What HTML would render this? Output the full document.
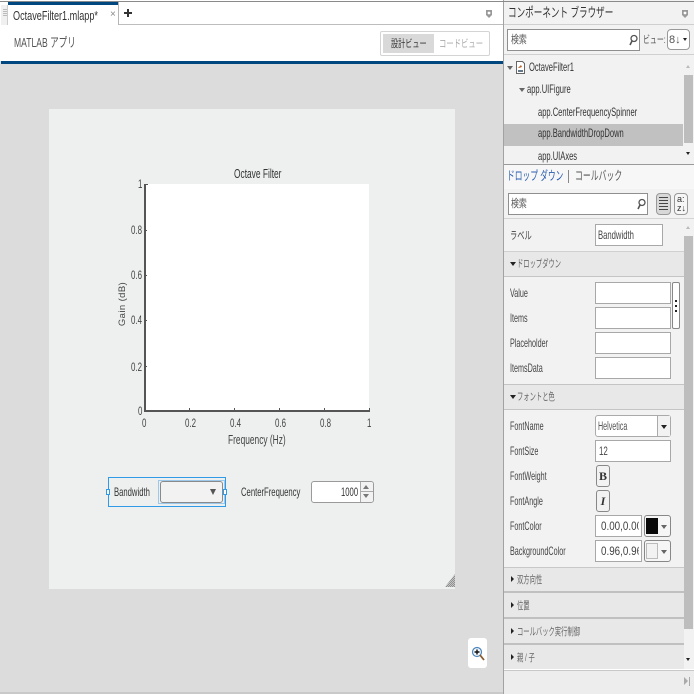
<!DOCTYPE html>
<html lang="ja"><head><meta charset="utf-8"><title>OctaveFilter1</title>
<style>
html,body{margin:0;padding:0}
body{width:694px;height:694px;overflow:hidden;position:relative;background:#dcdcdc;font-family:"Liberation Sans","Noto Sans CJK JP",sans-serif;color:#333}
div,span.a,svg{position:absolute;box-sizing:border-box}
.t{white-space:nowrap;font-size:12px;line-height:14px;transform-origin:0 50%;transform:scaleX(.6);color:#444}
.n{font-size:12px;transform:scaleX(.66);color:#444}
.c{font-size:12px;transform:scaleX(.64);color:#333}
.r{font-size:12px;transform:scaleX(.63);color:#333}
.j{font-size:10.5px;transform:scaleX(.6);color:#666}
.box{background:#fff;border:1px solid #a8a8a8}
.hdr{left:504px;width:180px;background:#e8e8e8;border-bottom:1px solid #c4c4c4}
.tri{width:0;height:0;border-left:2.5px solid transparent;border-right:2.5px solid transparent;border-top:3px solid #222}
.tw{border-left-width:3px;border-right-width:3px;border-top-width:4px}
.trr{width:0;height:0;border-top:3.5px solid transparent;border-bottom:3.5px solid transparent;border-left:3.5px solid #222}
.tk{background:#555}
.btn{background:#f2f2f2;border:1px solid #888;border-radius:3px}
</style></head><body>

<!-- top tab strip -->
<div style="left:0;top:0;width:503px;height:25px;background:#fff"></div>
<div style="left:0;top:1px;width:694px;height:1px;background:#8a8a8a"></div>
<div style="left:8px;top:2px;width:110px;height:3px;background:#00467f"></div>
<div style="left:118px;top:2px;width:1px;height:23px;background:#b5b5b5"></div>
<div style="left:1px;top:5px;width:7px;height:20px;background:#f0f0f0;border-right:1px solid #ccc"></div>
<div style="left:3px;top:9px;width:4px;height:8px;background:repeating-linear-gradient(#bbb 0 1px,#f0f0f0 1px 2px)"></div>
<div style="left:119px;top:24px;width:384px;height:1px;background:#bdbdbd"></div>
<div class="t" style="left:13px;top:9px;font-size:13px;transform:scaleX(.7);color:#333">OctaveFilter1.mlapp*</div>
<div class="t" style="left:110px;top:8px;color:#888;transform:none;font-size:10px">×</div>
<div style="left:124px;top:12px;width:8px;height:2px;background:#333"></div>
<div style="left:127px;top:9px;width:2px;height:8px;background:#333"></div>
<svg style="left:485px;top:9px" width="8" height="10" viewBox="0 0 8 10"><path d="M1 1h6v5L4 9 1 6z" fill="#999"/><circle cx="4" cy="4" r="1.4" fill="#fff"/></svg>

<!-- toolbar -->
<div style="left:0;top:25px;width:503px;height:36px;background:#fff"></div>
<div class="t" style="left:14px;top:36px;font-size:13px;transform:scaleX(.66);color:#555">MATLAB アプリ</div>
<div style="left:380px;top:31px;width:110px;height:25px;background:#fff;border:1px solid #d4d4d4;border-radius:2px"></div>
<div style="left:383px;top:34px;width:51px;height:19px;background:#d9d9d9"></div>
<div class="t" style="left:391px;top:37px;font-size:10.5px;transform:scaleX(.68);color:#333">設計ビュー</div>
<div class="t" style="left:439px;top:37px;font-size:10.5px;transform:scaleX(.7);color:#aaa">コードビュー</div>
<div style="left:1px;top:61px;width:502px;height:3px;background:#00467f"></div>

<!-- canvas -->
<div style="left:49px;top:109px;width:406px;height:480px;background:#eef0f0"></div>
<div style="left:145px;top:184px;width:224px;height:227px;background:#fff"></div>
<div style="left:144px;top:184px;width:2px;height:228px;background:#555"></div>
<div style="left:144px;top:410px;width:226px;height:2px;background:#555"></div>
<div class="tk" style="left:145px;top:184px;width:3px;height:1px"></div>
<div class="tk" style="left:145px;top:230px;width:2px;height:1px"></div>
<div class="tk" style="left:145px;top:275px;width:2px;height:1px"></div>
<div class="tk" style="left:145px;top:320px;width:2px;height:1px"></div>
<div class="tk" style="left:145px;top:366px;width:2px;height:1px"></div>
<div class="tk" style="left:189px;top:408px;width:1px;height:2px"></div>
<div class="tk" style="left:234px;top:408px;width:1px;height:2px"></div>
<div class="tk" style="left:279px;top:408px;width:1px;height:2px"></div>
<div class="tk" style="left:324px;top:408px;width:1px;height:2px"></div>
<div class="tk" style="left:369px;top:408px;width:1px;height:2px"></div>

<div class="t" style="left:234px;top:167px;font-size:12.5px;transform:scaleX(.67);color:#333">Octave Filter</div>
<div class="t n" style="left:138px;top:177px">1</div>
<div class="t n" style="left:131px;top:223px">0.8</div>
<div class="t n" style="left:131px;top:268px">0.6</div>
<div class="t n" style="left:131px;top:313px">0.4</div>
<div class="t n" style="left:131px;top:360px">0.2</div>
<div class="t n" style="left:138px;top:404px">0</div>
<div class="t n" style="left:142px;top:416px">0</div>
<div class="t n" style="left:185px;top:416px">0.2</div>
<div class="t n" style="left:230px;top:416px">0.4</div>
<div class="t n" style="left:275px;top:416px">0.6</div>
<div class="t n" style="left:320px;top:416px">0.8</div>
<div class="t n" style="left:367px;top:416px">1</div>
<div class="t" style="left:228px;top:433px;font-size:12.5px;transform:scaleX(.67);color:#444">Frequency (Hz)</div>
<div class="t" style="left:93px;top:297px;width:60px;text-align:center;font-size:9.5px;letter-spacing:.4px;transform-origin:50% 50%;transform:rotate(-90deg)">Gain (dB)</div>

<!-- controls -->
<div style="left:108px;top:477px;width:118px;height:30px;border:1px solid #2f9be8"></div>
<div style="left:158px;top:480px;width:67px;height:24px;border:1px solid #9cc8ec"></div>
<div style="left:106px;top:489px;width:4px;height:6px;background:#fff;border:1px solid #2f9be8"></div>
<div style="left:223px;top:489px;width:4px;height:6px;background:#fff;border:1px solid #2f9be8"></div>
<div class="t c" style="left:114px;top:485px">Bandwidth</div>
<div style="left:160px;top:481px;width:63px;height:22px;background:#f2f2f2;border:1px solid #8a8a8a;border-radius:3px"></div>
<div style="left:210px;top:489px;width:0;height:0;border-left:3.5px solid transparent;border-right:3.5px solid transparent;border-top:6px solid #555"></div>
<div class="t c" style="left:241px;top:485px">CenterFrequency</div>
<div style="left:311px;top:481px;width:63px;height:22px;background:#fff;border:1px solid #9a9a9a;border-radius:3px"></div>
<div style="left:360px;top:482px;width:13px;height:20px;background:#f2f2f2;border-left:1px solid #aaa;border-radius:0 3px 3px 0"></div>
<div style="left:361px;top:491px;width:12px;height:1px;background:#aaa"></div>
<div style="left:363px;top:485px;width:0;height:0;border-left:3px solid transparent;border-right:3px solid transparent;border-bottom:4px solid #777"></div>
<div style="left:363px;top:494px;width:0;height:0;border-left:3px solid transparent;border-right:3px solid transparent;border-top:4px solid #777"></div>
<div class="t c" style="left:341px;top:485px">1000</div>

<!-- resize grip -->
<svg style="left:445px;top:573px" width="10" height="14"><defs><pattern id="g" width="2" height="2" patternUnits="userSpaceOnUse"><rect width="2" height="2" fill="#c4c4c4"/><rect width="1" height="1" fill="#8f8f8f"/><rect x="1" y="1" width="1" height="1" fill="#8f8f8f"/></pattern></defs><path d="M10 1V14H0z" fill="url(#g)"/></svg>
<!-- zoom button -->
<div style="left:468px;top:638px;width:19px;height:30px;background:#fff;border-radius:3px"></div>
<svg style="left:471px;top:645px" width="14" height="18" viewBox="0 0 14 18"><circle cx="6" cy="7" r="4.5" fill="#f4f8fb" stroke="#4c86bd" stroke-width="1.2"/><path d="M3.5 7h5M6 4.5v5" stroke="#111" stroke-width="1.4"/><path d="M9 10l4 5" stroke="#8a5a2c" stroke-width="1.8"/></svg>

<!-- bottom noise -->
<div style="left:0;top:692px;width:503px;height:2px;background:#c9c9c9"></div>

<!-- right panel -->
<div style="left:503px;top:0;width:191px;height:694px;background:#f2f2f2;border-left:1px solid #a2a2a2"></div>
<div style="left:503px;top:1px;width:191px;height:1px;background:#8a8a8a"></div>
<div class="t" style="left:508px;top:6px;font-size:13px;transform:scaleX(.66);color:#333">コンポーネント ブラウザー</div>
<svg style="left:681px;top:9px" width="8" height="10" viewBox="0 0 8 10"><path d="M1 1h6v5L4 9 1 6z" fill="#999"/><circle cx="4" cy="4" r="1.4" fill="#fff"/></svg>
<div style="left:504px;top:24px;width:190px;height:1px;background:#cfcfcf"></div>

<div class="box" style="left:507px;top:29px;width:133px;height:22px;border-color:#8f8f8f"></div>
<div class="t" style="left:511px;top:33px;font-size:11px;transform:scaleX(.72);color:#555">検索</div>
<svg style="left:628px;top:34px" width="10" height="12" viewBox="0 0 10 12"><circle cx="6" cy="4.5" r="3" fill="none" stroke="#555" stroke-width="1.3"/><path d="M4 7L2 11" stroke="#555" stroke-width="1.6"/></svg>
<div class="t" style="left:643px;top:33px;font-size:10.5px;transform:scaleX(.66);color:#555">ビュー:</div>
<div style="left:667px;top:29px;width:23px;height:21px;background:#fff;border:1px solid #999;border-radius:4px"></div>
<div class="t" style="left:669px;top:33px;font-size:11px;transform:none;color:#555">8↓</div>
<div class="tri" style="left:683px;top:38px"></div>
<div style="left:504px;top:54px;width:190px;height:1px;background:#d0d0d0"></div>

<!-- tree -->
<div style="left:504px;top:55px;width:190px;height:109px;background:#f2f2f2"></div>
<div style="left:504px;top:124px;width:179px;height:22px;background:#c1c1c1"></div>
<div style="left:684px;top:75px;width:9px;height:68px;background:#bdbdbd"></div>
<div style="left:686px;top:65px;width:0;height:0;border-left:2.5px solid transparent;border-right:2.5px solid transparent;border-bottom:3px solid #bbb"></div>
<div class="tri" style="left:686px;top:152px"></div>
<div class="tri tw" style="left:507px;top:66px;border-top-color:#666"></div>
<svg style="left:516px;top:61px" width="9" height="13" viewBox="0 0 9 13"><path d="M.5.5h6l2 2v10h-8z" fill="#fff" stroke="#666"/><path d="M2 7l3-3 1 2-3 1z" fill="#b5632a"/><path d="M2 9h5v2H2z" fill="#678"/></svg>
<div class="t r" style="left:529px;top:60px">OctaveFilter1</div>
<div class="tri tw" style="left:519px;top:88px;border-top-color:#666"></div>
<div class="t r" style="left:527px;top:82px">app.UIFigure</div>
<div class="t r" style="left:538px;top:105px">app.CenterFrequencySpinner</div>
<div class="t r" style="left:538px;top:126px">app.BandwidthDropDown</div>
<div class="t r" style="left:538px;top:149px">app.UIAxes</div>
<div style="left:504px;top:164px;width:190px;height:1px;background:#9a9a9a"></div>

<!-- inspector tabs -->
<div style="left:504px;top:165px;width:190px;height:24px;background:#f7f7f7"></div>
<div class="t" style="left:507px;top:169px;font-size:12.5px;transform:scaleX(.62);color:#2a5db0">ドロップ ダウン</div>
<div style="left:568px;top:170px;width:1px;height:13px;background:#888"></div>
<div class="t" style="left:575px;top:169px;font-size:12.5px;transform:scaleX(.63);color:#555">コールバック</div>

<div class="box" style="left:508px;top:193px;width:140px;height:22px;border-color:#8f8f8f"></div>
<div class="t" style="left:511px;top:197px;font-size:11px;transform:scaleX(.72);color:#555">検索</div>
<svg style="left:636px;top:198px" width="10" height="12" viewBox="0 0 10 12"><circle cx="6" cy="4.5" r="3" fill="none" stroke="#555" stroke-width="1.3"/><path d="M4 7L2 11" stroke="#555" stroke-width="1.6"/></svg>
<div style="left:656px;top:193px;width:15px;height:22px;background:#d8d8d8;border:1px solid #999;border-radius:4px"></div>
<div style="left:659px;top:197px;width:9px;height:14px;background:repeating-linear-gradient(#444 0 1px,transparent 1px 3px)"></div>
<div style="left:674px;top:193px;width:14px;height:22px;background:#f6f6f6;border:1px solid #999;border-radius:4px"></div>
<div class="t" style="left:677px;top:195px;font-size:9px;line-height:9px;transform:none;white-space:normal;width:10px;color:#333">a:<br>z↓</div>
<div style="left:504px;top:218px;width:190px;height:1px;background:#d4d4d4"></div>

<!-- inspector scrollbar -->
<div style="left:684px;top:236px;width:9px;height:393px;background:#bdbdbd"></div>
<div style="left:686px;top:226px;width:0;height:0;border-left:2.5px solid transparent;border-right:2.5px solid transparent;border-bottom:3px solid #bbb"></div>
<div class="tri" style="left:686px;top:658px"></div>

<!-- label row -->
<div class="t" style="left:510px;top:229px;font-size:11px;transform:scaleX(.66)">ラベル</div>
<div class="box" style="left:595px;top:224px;width:68px;height:22px"></div>
<div class="t" style="left:598px;top:228px;font-size:12px;transform:scaleX(.64)">Bandwidth</div>

<!-- dropdown section -->
<div class="hdr" style="top:251px;height:26px;border-top:1px solid #d0d0d0"></div>
<div class="tri tw" style="left:510px;top:262px"></div>
<div class="t j" style="left:517px;top:257px">ドロップダウン</div>
<div class="t" style="left:510px;top:286px">Value</div>
<div class="box" style="left:595px;top:282px;width:76px;height:22px"></div>
<div class="t" style="left:510px;top:311px">Items</div>
<div class="box" style="left:595px;top:307px;width:76px;height:22px"></div>
<div class="t" style="left:510px;top:336px">Placeholder</div>
<div class="box" style="left:595px;top:332px;width:76px;height:22px"></div>
<div class="t" style="left:510px;top:361px">ItemsData</div>
<div class="box" style="left:595px;top:357px;width:76px;height:22px"></div>
<div style="left:672px;top:282px;width:8px;height:47px;background:#fff;border:1px solid #888;border-radius:2px"></div>
<div style="left:675px;top:300px;width:2px;height:2px;background:#222"></div>
<div style="left:675px;top:305px;width:2px;height:2px;background:#222"></div>
<div style="left:675px;top:310px;width:2px;height:2px;background:#222"></div>

<!-- font section -->
<div class="hdr" style="top:384px;height:26px;border-top:1px solid #c4c4c4"></div>
<div class="tri tw" style="left:510px;top:395px"></div>
<div class="t j" style="left:517px;top:390px">フォントと色</div>
<div class="t" style="left:510px;top:419px">FontName</div>
<div style="left:595px;top:415px;width:76px;height:22px;background:#fff;border:1px solid #aaa;border-radius:3px"></div>
<div style="left:657px;top:416px;width:13px;height:20px;background:#f2f2f2;border-left:1px solid #aaa"></div>
<div class="tri tw" style="left:661px;top:425px"></div>
<div class="t" style="left:598px;top:420px;font-size:11.5px;transform:scaleX(.62);color:#555">Helvetica</div>
<div class="t" style="left:510px;top:444px">FontSize</div>
<div class="box" style="left:595px;top:440px;width:76px;height:22px"></div>
<div class="t n" style="left:599px;top:444px">12</div>
<div class="t" style="left:510px;top:469px">FontWeight</div>
<div class="btn" style="left:596px;top:465px;width:14px;height:22px"></div>
<div style="left:596px;top:469px;width:14px;text-align:center;font:bold 12px/14px 'Liberation Serif',serif;color:#333">B</div>
<div class="t" style="left:510px;top:494px">FontAngle</div>
<div class="btn" style="left:596px;top:490px;width:14px;height:22px"></div>
<div style="left:596px;top:494px;width:14px;text-align:center;font:italic bold 12px/14px 'Liberation Serif',serif;color:#333">I</div>
<div class="t" style="left:510px;top:519px">FontColor</div>
<div class="box" style="left:595px;top:515px;width:47px;height:22px;overflow:hidden"></div>
<div class="t" style="left:601px;top:519px;font-size:12px;transform:scaleX(.82);color:#444;width:46px;overflow:hidden">0.00,0.00</div>
<div class="btn" style="left:644px;top:515px;width:27px;height:22px;background:#f6f6f6"></div>
<div style="left:646px;top:518px;width:12px;height:16px;background:#0a0a0a"></div>
<div class="tri tw" style="left:661px;top:525px;border-top-color:#666"></div>
<div class="t" style="left:510px;top:544px">BackgroundColor</div>
<div class="box" style="left:595px;top:540px;width:47px;height:22px"></div>
<div class="t" style="left:601px;top:544px;font-size:12px;transform:scaleX(.82);color:#444;width:46px;overflow:hidden">0.96,0.96</div>
<div class="btn" style="left:644px;top:540px;width:27px;height:22px;background:#f6f6f6"></div>
<div style="left:646px;top:543px;width:12px;height:16px;background:#f2f2f2;border:1px solid #bbb"></div>
<div class="tri tw" style="left:661px;top:550px;border-top-color:#666"></div>

<!-- collapsed sections -->
<div class="hdr" style="top:567px;height:26px;border-top:1px solid #c8c8c8;border-bottom:2px solid #c0c0c0"></div>
<div class="trr" style="left:511px;top:576px"></div>
<div class="t j" style="left:517px;top:573px">双方向性</div>
<div class="hdr" style="top:593px;height:26px;border-bottom:2px solid #c0c0c0"></div>
<div class="trr" style="left:511px;top:602px"></div>
<div class="t j" style="left:517px;top:599px">位置</div>
<div class="hdr" style="top:619px;height:26px;border-bottom:2px solid #c0c0c0"></div>
<div class="trr" style="left:511px;top:628px"></div>
<div class="t j" style="left:517px;top:625px">コールバック実行制御</div>
<div class="hdr" style="top:645px;height:24px;border-bottom:none"></div>
<div class="trr" style="left:511px;top:654px"></div>
<div class="t j" style="left:517px;top:651px">親 / 子</div>
<div style="left:504px;top:669px;width:190px;height:1px;background:#fff"></div>
<div style="left:504px;top:670px;width:190px;height:1px;background:#c8c8c8"></div>
<div style="left:504px;top:671px;width:190px;height:23px;background:#ededed"></div>
<div style="left:684px;top:677px;width:0;height:0;border-top:4px solid transparent;border-bottom:4px solid transparent;border-left:4px solid #aaa"></div>
<div style="left:689px;top:677px;width:1px;height:9px;background:#aaa"></div>
</body></html>
